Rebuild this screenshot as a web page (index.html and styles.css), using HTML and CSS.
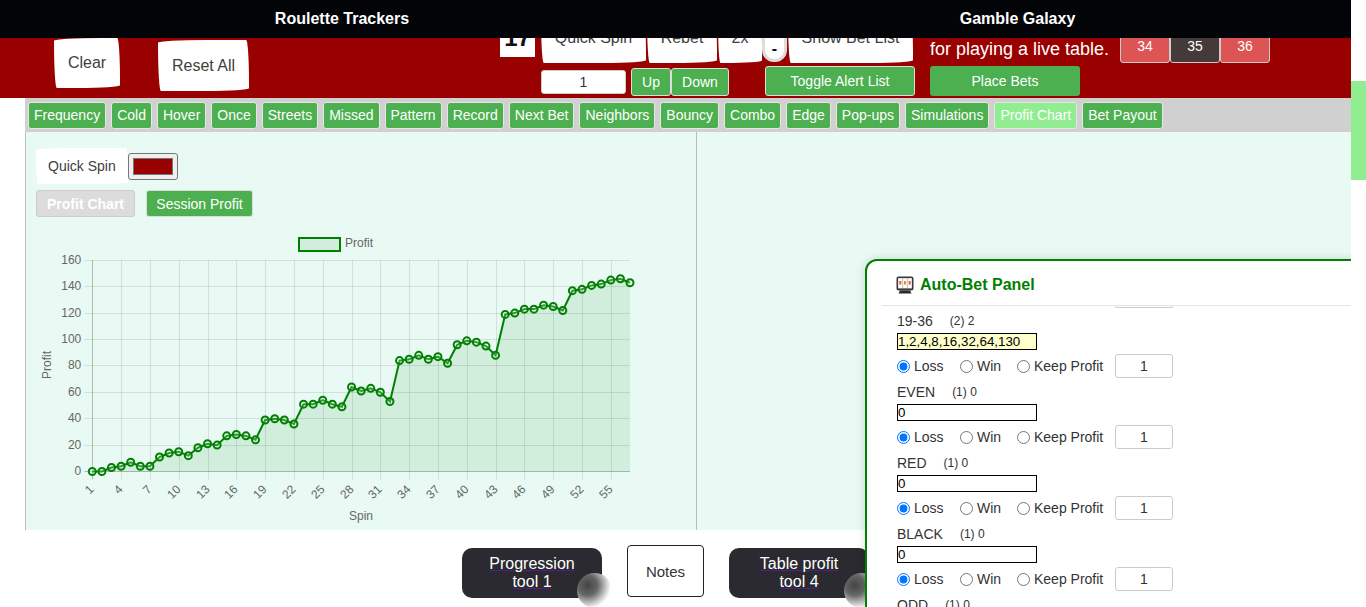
FILE: index.html
```html
<!DOCTYPE html>
<html lang="en">
<head>
    <meta charset="UTF-8">
    <meta name="viewport" content="width=device-width, initial-scale=1.0">
    <title>Roulette Trackers</title>
    <link rel="stylesheet" href="styles.css">
</head>
<body>

    <div class="page">
        <div class="top-nav">
            <a class="nav-link">Roulette Trackers</a>
            <a class="nav-link">Gamble Galaxy</a>
        </div>

        <div class="control-bar">
            <button class="sketch-btn clear-btn">Clear</button>
            <button class="sketch-btn reset-btn">Reset All</button>

            <div class="spin-area">
                <div class="spin-row">
                    <div class="last-number">17</div>
                    <button class="sketch-btn quick-btn">Quick Spin</button>
                    <button class="sketch-btn rebet-btn">Rebet</button>
                    <button class="sketch-btn double-btn">2x</button>
                    <button class="minus-btn">-</button>
                    <button class="sketch-btn list-btn">Show Bet List</button>
                </div>
                <div class="unit-row">
                    <input class="unit-input" type="text" value="1">
                    <button class="green-btn up-btn">Up</button>
                    <button class="green-btn down-btn">Down</button>
                    <button class="green-btn alert-btn">Toggle Alert List</button>
                </div>
            </div>

            <div class="live-area">
                <div class="live-text">for playing a live table.</div>
                <button class="green-btn place-btn">Place Bets</button>
            </div>

            <div class="numbers">
                <button class="num-btn num-red">34</button>
                <button class="num-btn num-black">35</button>
                <button class="num-btn num-red">36</button>
            </div>
        </div>

        <div class="tab-bar">
            <button class="tab">Frequency</button>
            <button class="tab">Cold</button>
            <button class="tab">Hover</button>
            <button class="tab">Once</button>
            <button class="tab">Streets</button>
            <button class="tab">Missed</button>
            <button class="tab">Pattern</button>
            <button class="tab">Record</button>
            <button class="tab">Next Bet</button>
            <button class="tab">Neighbors</button>
            <button class="tab">Bouncy</button>
            <button class="tab">Combo</button>
            <button class="tab">Edge</button>
            <button class="tab">Pop-ups</button>
            <button class="tab">Simulations</button>
            <button class="tab tab-active">Profit Chart</button>
            <button class="tab">Bet Payout</button>
        </div>

        <div class="content">
            <div class="chart-panel">
                <div class="color-row">
                    <div class="color-label">Quick Spin</div>
                    <div class="color-swatch"><span></span></div>
                </div>
                <div class="chart-buttons">
                    <button class="chart-btn chart-btn-off">Profit Chart</button>
                    <button class="chart-btn">Session Profit</button>
                </div>
                <svg id="profitChart" class="chart" width="670" height="311" viewBox="0 0 670 311"></svg>
            </div>
        </div>

        <div class="tools">
            <button class="tool-btn"><u>Progression<br>tool 1</u><i class="tool-knob"></i></button>
            <button class="notes-btn">Notes</button>
            <button class="tool-btn"><u>Table profit<br>tool 4</u><i class="tool-knob"></i></button>
        </div>

        <!-- floating panel -->
        <div class="bet-panel">
            <div class="bet-header">
                <svg class="slot-icon" width="18" height="18" viewBox="0 0 18 18">
                    <rect x="0.5" y="0.5" width="17" height="14" rx="2" fill="#3a3a3a"/>
                    <rect x="2" y="2" width="14" height="10.5" fill="#c9c2ba"/>
                    <rect x="2.5" y="2.5" width="3.6" height="9.5" fill="#fff"/>
                    <rect x="7.2" y="2.5" width="3.6" height="9.5" fill="#fff"/>
                    <rect x="11.9" y="2.5" width="3.6" height="9.5" fill="#fff"/>
                    <rect x="3.3" y="5" width="2" height="3.5" fill="#e2574c"/>
                    <rect x="8" y="5" width="2" height="3.5" fill="#e8893c"/>
                    <rect x="12.7" y="5" width="2" height="3.5" fill="#e2574c"/>
                    <path d="M4 14.5h10l1.5 3h-13z" fill="#2a2a2a"/>
                </svg>
                <span class="bet-title">Auto-Bet Panel</span>
            </div>
            <div class="bet-body">
                <div class="stub"></div>

                <div class="bet-row">
                    <div class="bet-label"><span>19-36</span><small>(2) 2</small></div>
                    <input class="bet-seq bet-seq-on" type="text" value="1,2,4,8,16,32,64,130">
                    <div class="bet-options">
                        <label class="opt-loss"><input type="radio" name="r1" checked>Loss</label>
                        <label class="opt-win"><input type="radio" name="r1">Win</label>
                        <label class="opt-keep"><input type="radio" name="r1">Keep Profit</label>
                        <input class="bet-keep" type="text" value="1">
                    </div>
                </div>

                <div class="bet-row">
                    <div class="bet-label"><span>EVEN</span><small>(1) 0</small></div>
                    <input class="bet-seq" type="text" value="0">
                    <div class="bet-options">
                        <label class="opt-loss"><input type="radio" name="r2" checked>Loss</label>
                        <label class="opt-win"><input type="radio" name="r2">Win</label>
                        <label class="opt-keep"><input type="radio" name="r2">Keep Profit</label>
                        <input class="bet-keep" type="text" value="1">
                    </div>
                </div>

                <div class="bet-row">
                    <div class="bet-label"><span>RED</span><small>(1) 0</small></div>
                    <input class="bet-seq" type="text" value="0">
                    <div class="bet-options">
                        <label class="opt-loss"><input type="radio" name="r3" checked>Loss</label>
                        <label class="opt-win"><input type="radio" name="r3">Win</label>
                        <label class="opt-keep"><input type="radio" name="r3">Keep Profit</label>
                        <input class="bet-keep" type="text" value="1">
                    </div>
                </div>

                <div class="bet-row">
                    <div class="bet-label"><span>BLACK</span><small>(1) 0</small></div>
                    <input class="bet-seq" type="text" value="0">
                    <div class="bet-options">
                        <label class="opt-loss"><input type="radio" name="r4" checked>Loss</label>
                        <label class="opt-win"><input type="radio" name="r4">Win</label>
                        <label class="opt-keep"><input type="radio" name="r4">Keep Profit</label>
                        <input class="bet-keep" type="text" value="1">
                    </div>
                </div>

                <div class="bet-row">
                    <div class="bet-label"><span>ODD</span><small>(1) 0</small></div>
                </div>
            </div>
        </div>
    </div>

    <div class="scrollbar"><div class="scroll-thumb"></div></div>

    <script src="chart.js"></script>
</body>
</html>
```

FILE: styles.css
```css
/* Reset */
* {
    box-sizing: border-box;
    margin: 0;
    padding: 0;
}

body {
    display: flex;
    height: 607px;
    overflow: hidden;
    background: #fff;
    font-family: "Liberation Sans", Arial, sans-serif;
    color: #333;
}

.page {
    position: relative;
    width: 1351px;
    height: 607px;
    overflow: hidden;
}

/* Scrollbar */
.scrollbar {
    width: 15px;
    background: #fff;
}

.scroll-thumb {
    width: 15px;
    height: 99px;
    margin-top: 81px;
    background: #90ee90;
}

/* Top Nav */
.top-nav {
    display: grid;
    grid-template-columns: 684px 1fr;
    height: 38px;
    background: #020408;
}

.nav-link {
    color: #fff;
    font-size: 16px;
    font-weight: bold;
    line-height: 38px;
    text-align: center;
}

/* Red Control Bar */
.control-bar {
    display: flex;
    align-items: flex-start;
    height: 60px;
    overflow: hidden;
    background: #990000;
}

button {
    font-family: inherit;
    cursor: pointer;
}

.sketch-btn {
    background: #fff;
    border: none;
    border-radius: 255px 15px 225px 15px / 15px 225px 15px 255px;
    color: #41403e;
    font-size: 16px;
}

.clear-btn {
    width: 66px;
    height: 50px;
    margin-left: 54px;
}

.reset-btn {
    width: 91px;
    height: 51px;
    margin: 2px 0 0 38px;
}

.spin-area {
    width: 415px;
    margin-left: 251px;
}

.spin-row {
    display: flex;
    align-items: flex-start;
    height: 30px;
}

.last-number {
    width: 35px;
    height: 44px;
    margin: -25px 6px 0 0;
    background: #fff;
    color: #111;
    font-size: 24px;
    font-weight: bold;
    line-height: 50px;
    text-align: center;
}

.spin-row .sketch-btn {
    height: 50px;
    margin-top: -25px;
}

.quick-btn { width: 105px; margin-right: 1px; }
.rebet-btn { width: 70px; margin-right: 1px; }
.double-btn { width: 44px; }
.list-btn { width: 125px; margin-left: 1px; }

.minus-btn {
    width: 25px;
    height: 36px;
    margin-top: -12px;
    background: #fff;
    border: 3px solid #ddd;
    border-radius: 12px;
    color: #111;
    font-size: 16px;
    font-weight: bold;
    padding-top: 10px;
}

.unit-row {
    display: flex;
    align-items: flex-start;
}

.unit-input {
    width: 85px;
    height: 24px;
    margin: 2px 5px 0 41px;
    background: #fff;
    border: 1px solid #ccc;
    border-radius: 3px;
    color: #333;
    font-family: inherit;
    font-size: 14px;
    text-align: center;
}

.green-btn {
    background: #4caf50;
    border: 1px solid #ddd;
    border-radius: 3px;
    color: #fff;
    font-size: 14px;
}

.up-btn { width: 40px; height: 28px; }
.down-btn { width: 58px; height: 28px; }

.alert-btn {
    width: 150px;
    height: 30px;
    margin: -2px 0 0 36px;
}

.live-area {
    width: 190px;
    margin-left: 15px;
}

.live-text {
    height: 28px;
    color: #fff;
    font-size: 18px;
    line-height: 22px;
}

.place-btn {
    display: block;
    width: 150px;
    height: 30px;
    border: none;
}

.numbers {
    display: flex;
    margin-top: -25px;
}

.num-btn {
    width: 50px;
    height: 50px;
    border: 1px solid #ccc;
    border-radius: 3px;
    color: #fff;
    font-size: 14px;
    padding-top: 16px;
}

.num-red { background: #dc5454; }
.num-black { background: #443a3a; }

/* Tabs */
.tab-bar {
    display: flex;
    gap: 5px;
    height: 34px;
    margin-left: 25px;
    padding: 4px 3px;
    background: #d0d0d0;
}

.tab {
    height: 27px;
    padding: 0 5px 2px;
    background: #4caf50;
    border: 1px solid #e6e6e6;
    border-radius: 3px;
    color: #fff;
    font-size: 14px;
}

.tab-active {
    background: #90ee90;
}

/* Chart Area */
.content {
    height: 398px;
    margin-left: 25px;
    background: #e9faf4;
    border-left: 1px solid #bbb;
}

.chart-panel {
    width: 671px;
    height: 398px;
    border-right: 1px solid #bbb;
}

.color-row {
    display: flex;
    align-items: center;
    padding: 16px 0 0 10px;
}

.color-label {
    width: 92px;
    height: 36px;
    background: #fff;
    border-radius: 255px 15px 225px 15px / 15px 225px 15px 255px;
    color: #41403e;
    font-size: 14px;
    line-height: 36px;
    padding-left: 12px;
}

.color-swatch {
    width: 50px;
    height: 27px;
    padding: 4px;
    background: #efefef;
    border: 1px solid #767676;
    border-radius: 3px;
}

.color-swatch span {
    display: block;
    height: 17px;
    background: #990000;
    border: 1px solid #777;
}

.chart-buttons {
    display: flex;
    gap: 11px;
    padding: 6px 0 0 10px;
}

.chart-btn {
    width: 107px;
    height: 27px;
    background: #4caf50;
    border: 1px solid #ddd;
    border-radius: 3px;
    color: #fff;
    font-size: 14px;
}

.chart-btn-off {
    width: 99px;
    background: #dcdcdc;
    border-color: #ccc;
    font-weight: bold;
}

.chart {
    display: block;
    margin-top: 2px;
}

.chart text {
    fill: #666;
    font-family: "Liberation Sans", Arial, sans-serif;
    font-size: 12px;
}

/* Bottom Tools */
.tools {
    display: flex;
    align-items: flex-start;
    height: 77px;
    padding: 15px 0 0 462px;
}

.tool-btn {
    position: relative;
    width: 140px;
    height: 50px;
    margin-top: 3px;
    background: #2b2a30;
    border: none;
    border-radius: 10px;
    color: #fff;
    font-size: 16px;
    line-height: 18px;
}

.tool-btn u {
    text-decoration-color: #551a8b;
}

.tool-knob {
    position: absolute;
    left: 115px;
    top: 25px;
    width: 35px;
    height: 35px;
    border-radius: 50%;
    background: radial-gradient(circle at 30% 35%, #444 0%, #666 30%, #fff 70%);
}

.notes-btn {
    width: 77px;
    height: 52px;
    margin: 0 25px;
    padding-top: 1px;
    background: #fff;
    border: 1px solid #222;
    border-radius: 4px;
    color: #333;
    font-size: 15px;
}

/* Auto-Bet Panel */
.bet-panel {
    position: absolute;
    left: 865px;
    top: 259px;
    width: 500px;
    height: 360px;
    background: #fff;
    border: 2px solid #008000;
    border-radius: 12px;
    box-shadow: 0 0 10px rgba(0, 0, 0, 0.15);
}

.bet-header {
    display: flex;
    align-items: center;
    gap: 6px;
    height: 45px;
    margin-left: 15px;
    padding: 4px 0 0 14px;
    border-bottom: 1px solid #e5e5e5;
}

.bet-title {
    color: #008000;
    font-size: 16px;
    font-weight: bold;
}

.bet-body {
    padding-left: 30px;
}

.stub {
    width: 58px;
    height: 2px;
    margin: 0 0 5px 218px;
    border: 1px solid #ccc;
    border-top: none;
    border-radius: 0 0 3px 3px;
}

.bet-row {
    height: 71px;
    font-size: 14px;
}

.bet-label {
    display: flex;
    align-items: center;
    height: 16px;
    margin-bottom: 4px;
    color: #333;
}

.bet-label small {
    margin-left: 17px;
    font-size: 12px;
}

.bet-seq {
    display: block;
    width: 140px;
    height: 17px;
    padding-left: 0;
    border: 1px solid #000;
    font-family: inherit;
    font-size: 13.33px;
    color: #000;
}

.bet-seq-on {
    background: #ffffcc;
}

.bet-options {
    display: flex;
    align-items: center;
    height: 24px;
    margin-top: 4px;
}

.bet-options label {
    display: flex;
    align-items: center;
}

.bet-options input[type="radio"] {
    width: 13px;
    height: 13px;
    margin-right: 4px;
}

.opt-loss { width: 63px; }
.opt-win { width: 57px; }
.opt-keep { width: 98px; }

.bet-keep {
    width: 58px;
    height: 24px;
    border: 1px solid #ccc;
    border-radius: 3px;
    font-family: inherit;
    font-size: 14px;
    text-align: center;
    color: #333;
}
```

FILE: chart.js
```js
const profit = [0, 0, 3, 4, 7, 4, 4, 11, 14, 15, 12, 18, 21, 20, 27, 28, 27, 24, 39, 40, 39, 36, 51, 51, 54, 51, 49, 64, 61, 63, 60, 53, 84, 85, 88, 85, 87, 82, 96, 99, 98, 95, 88, 119, 120, 123, 123, 126, 125, 122, 137, 138, 141, 142, 145, 146, 143];

const svg = document.getElementById("profitChart");
const ns = "http://www.w3.org/2000/svg";

// svg origin is at page x 26, y 219
const plot = { left: 66.3, right: 604, top: 41.3, bottom: 252.5 };
const stepX = (plot.right - plot.left) / (profit.length - 1);
const x = i => plot.left + i * stepX;
const y = v => plot.bottom - (v / 160) * (plot.bottom - plot.top);

function add(tag, attrs, text) {
    let el = document.createElementNS(ns, tag);
    for (let key in attrs) el.setAttribute(key, attrs[key]);
    if (text !== undefined) el.textContent = text;
    svg.appendChild(el);
    return el;
}

// horizontal grid + y labels
for (let v = 0; v <= 160; v += 20) {
    let py = Math.floor(y(v)) + 0.5;
    add("line", { x1: plot.left - 8, x2: plot.right, y1: py, y2: py, stroke: v === 0 ? "rgba(0,0,0,0.25)" : "rgba(0,0,0,0.1)" });
    add("text", { x: plot.left - 11, y: py + 3.5, "text-anchor": "end" }, v);
}

// vertical grid + x labels
for (let i = 0; i < profit.length; i += 3) {
    let px = Math.round(x(i)) + 0.5;
    let lx = px + 2, ly = plot.bottom + 18.5;
    add("line", { x1: px, x2: px, y1: plot.top, y2: plot.bottom + 8, stroke: i === 0 ? "rgba(0,0,0,0.25)" : "rgba(0,0,0,0.1)" });
    add("text", { x: lx, y: ly, "text-anchor": "end", transform: `rotate(-45 ${lx} ${ly})` }, i + 1);
}

// filled area and line
let line = profit.map((v, i) => `${x(i).toFixed(1)},${y(v).toFixed(1)}`).join(" ");
add("polygon", { points: `${plot.left},${plot.bottom} ${line} ${plot.right},${plot.bottom}`, fill: "rgba(0,128,0,0.1)" });
add("polyline", { points: line, fill: "none", stroke: "#008000", "stroke-width": 2 });

profit.forEach((v, i) => {
    add("circle", { cx: x(i), cy: y(v), r: 3.5, fill: "rgba(255,255,255,0.2)", stroke: "#008000", "stroke-width": 2 });
});

// legend
add("rect", { x: 273, y: 19, width: 41, height: 13, fill: "#d3eddd", stroke: "#008000", "stroke-width": 2 });
add("text", { x: 319, y: 28 }, "Profit");

// axis titles
add("text", { x: 335, y: 301, "text-anchor": "middle" }, "Spin");
add("text", { x: 25, y: 146, "text-anchor": "middle", transform: "rotate(-90 25 146)" }, "Profit");
```
